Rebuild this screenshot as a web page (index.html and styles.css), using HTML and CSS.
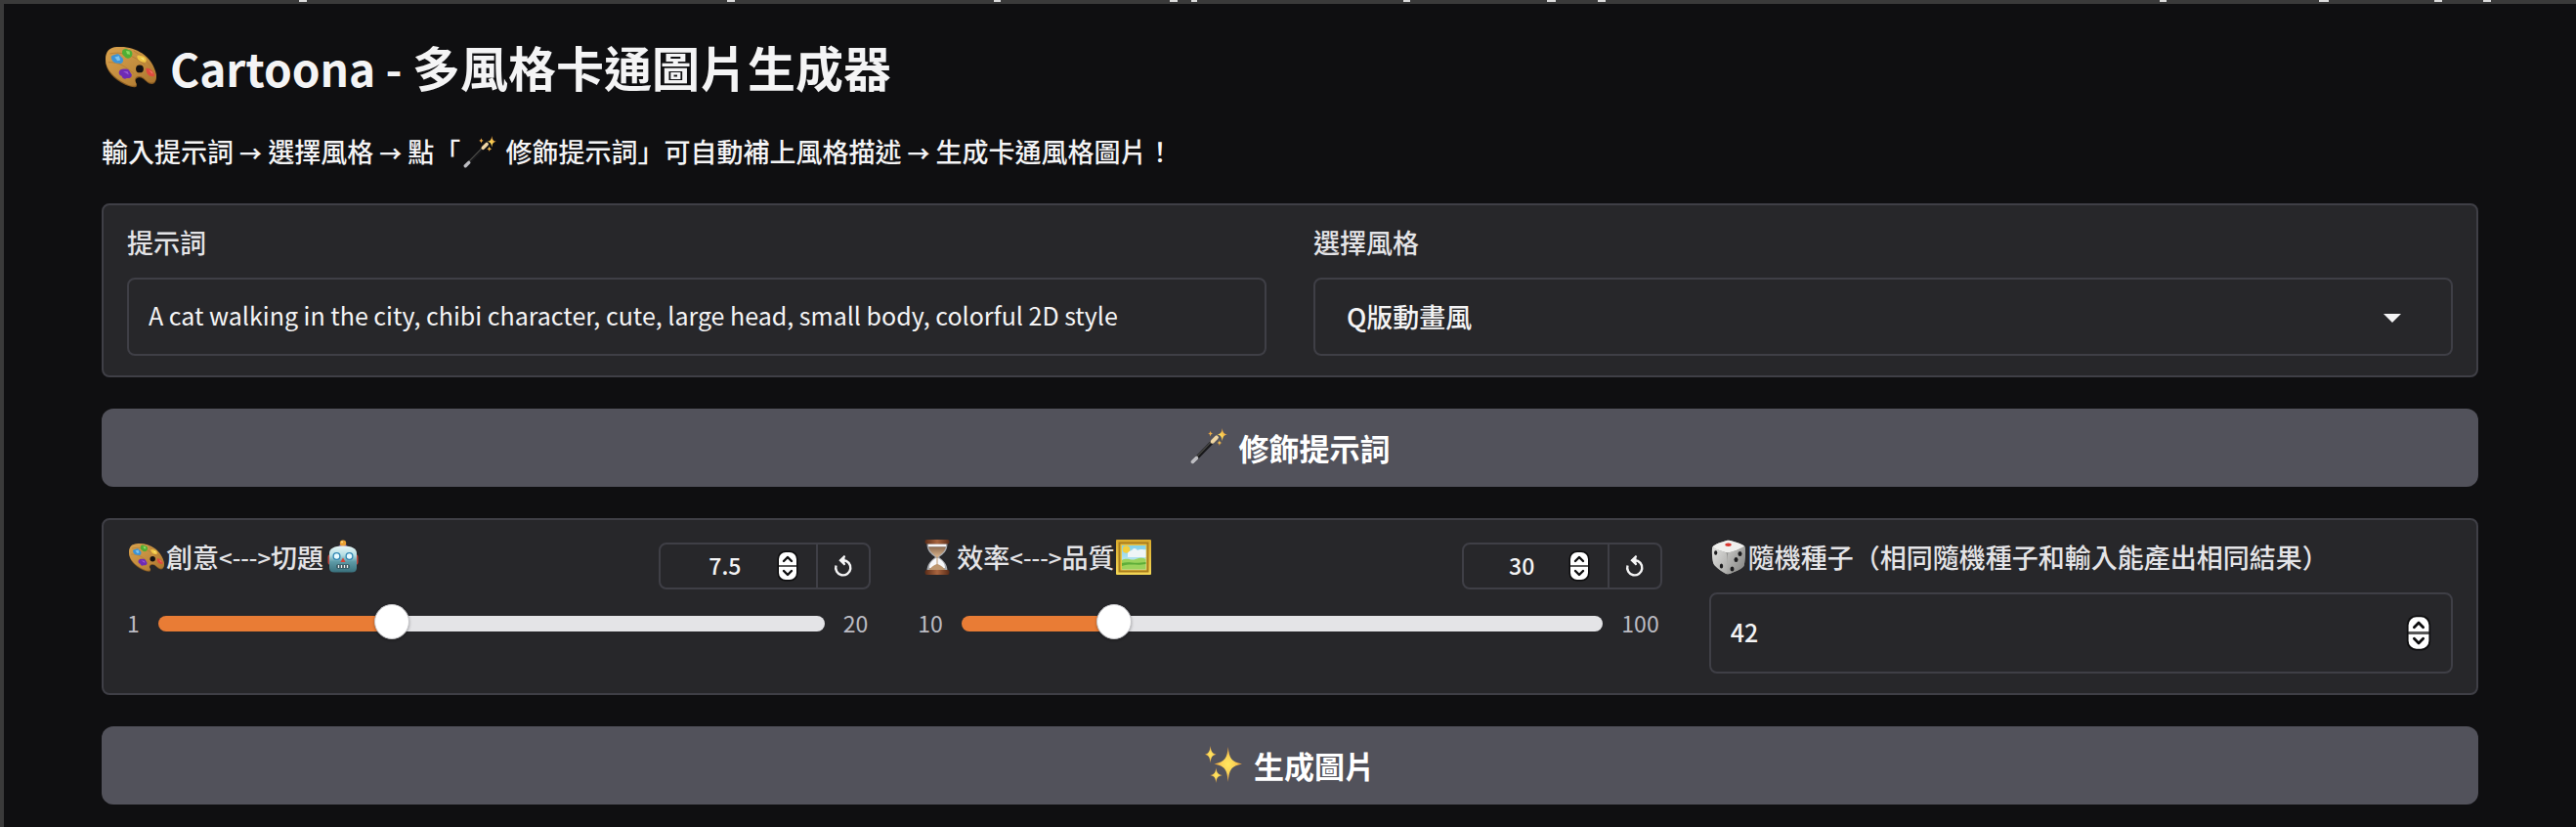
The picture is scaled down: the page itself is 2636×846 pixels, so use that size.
FILE: index.html
```html
<!DOCTYPE html>
<html lang="zh-Hant">
<head>
<meta charset="utf-8">
<meta name="viewport" content="width=device-width, initial-scale=1">
<title>Cartoona</title>
<link rel="stylesheet" href="styles.css">
</head>
<body>
<svg class="defs" aria-hidden="true">
  <defs>
    <linearGradient id="wood" x1="0" y1="0" x2="1" y2="1"><stop offset="0" stop-color="#d9a24e"/><stop offset=".6" stop-color="#c08a3c"/><stop offset="1" stop-color="#a8722c"/></linearGradient>
    <linearGradient id="face" x1="0" y1="0" x2="0" y2="1"><stop offset="0" stop-color="#e8f7f8"/><stop offset=".35" stop-color="#b4dde2"/><stop offset=".6" stop-color="#5d9aa6"/><stop offset="1" stop-color="#39707c"/></linearGradient>
    <linearGradient id="brown" x1="0" y1="0" x2="1" y2="0"><stop offset="0" stop-color="#5a2c18"/><stop offset=".5" stop-color="#a9653f"/><stop offset="1" stop-color="#5a2c18"/></linearGradient>
    <linearGradient id="sand" x1="0" y1="0" x2="0" y2="1"><stop offset="0" stop-color="#8e6c51"/><stop offset="1" stop-color="#d9b48d"/></linearGradient>
    <linearGradient id="sky" x1="0" y1="0" x2="0" y2="1"><stop offset="0" stop-color="#7fd0ea"/><stop offset="1" stop-color="#d9f0f4"/></linearGradient>
    <linearGradient id="gold" x1="0" y1="0" x2="0" y2="1"><stop offset="0" stop-color="#d8a92c"/><stop offset="1" stop-color="#f3d655"/></linearGradient>
    <linearGradient id="die-left" x1="0" y1="0" x2="1" y2="1"><stop offset="0" stop-color="#e2e2e0"/><stop offset="1" stop-color="#a9a9a7"/></linearGradient>
    <linearGradient id="die-right" x1="0" y1="0" x2="1" y2="1"><stop offset="0" stop-color="#c9c9c7"/><stop offset="1" stop-color="#80807e"/></linearGradient>
    <radialGradient id="spark"><stop offset="0" stop-color="#ffe75f"/><stop offset=".45" stop-color="#fbd457"/><stop offset="1" stop-color="#e79a3c"/></radialGradient>
  </defs>
  <symbol id="palette" viewBox="0 0 36 36">
    <path fill="#8a5c22" d="M0 14C0 8 3 5 8 4.600C15 4 21 6 26 9.500C31 13 35 19 36 25C36.200 28 35 30.200 33 30.400C30 30.400 28.500 28 26.500 26.600C24 25 21 26 21.200 28.500C21.300 30 22.500 30.500 22 32C21 33.400 18 32.500 14 31C6 27 0 21 0 14Z"/>
    <path fill="url(#wood)" d="M0 13C0 7 3 4.500 8 4.200C15 3.600 21 5.300 26 8.700C31 12 35 18 36 24C36.200 27 35 29.300 33 29.500C30 29.600 28.500 27.200 26.500 25.800C24 24 20.700 25 20.800 27.700C21 29.400 22.500 30 21.500 31.300C20 32.300 17 31.500 13.500 29.700C6 26 0 20 0 13Z"/>
    <path fill="none" stroke="#b47c34" stroke-width=".6" d="M3 9C11 7 20 10 28 17M2 15C10 15 14 18 20 23M20 7C25 10 29 14 32 18"/>
    <circle cx="24.200" cy="19.700" r="2.700" fill="#141112"/>
    <path fill="#3d93d6" d="M4 11C5 9.500 7 10 8 9.200C10 8.700 10.500 11 12 12C13.500 14 11.500 17 9.500 15.800C7 16 4 14.500 4 11Z"/>
    <path fill="#7cc4ee" d="M6.500 11.500l3-1l1 3l-2 .5z"/>
    <path fill="#4fae35" d="M11.800 7.500C12 5 15 5.200 16 6.200C19 6 19.500 9 18.600 10.600C17.500 13 14 12.500 13.300 10.800C12 10 11.600 9 11.800 7.500Z"/>
    <path fill="#8edb63" d="M14.500 7l2.500.3l.3 2.300l-2-.4z"/>
    <path fill="#efc545" d="M22.300 10.800C23.500 9.200 25 10.600 26.500 10.700C29 11.300 29.500 14 28.300 15C26 15.500 22.500 14 22.300 10.800Z"/>
    <path fill="#fdeb8a" d="M24.500 11.500l2.500.8l.3 1.600z"/>
    <path fill="#6e2bb4" d="M9.500 22C9.800 20 12 19.500 14 19.800C17 19.300 17 22 18.500 23.500C19 26 16.500 26.500 15 26.300C13 27.500 11.700 26 11.500 24.800C10 24.400 9.300 23.500 9.500 22Z"/>
    <path fill="#9b5ad8" d="M12.500 21.500l3.200.2l.8 2.200z"/>
    <path fill="#de4a3e" d="M28.500 19.500C31 18.500 33.500 21 34.800 24C34.500 26 30.500 25 29.300 22.800Z"/>
    <path fill="#f58a74" d="M30.500 20.500l2.500 1.500l.5 1.500z"/>
  </symbol>
  <symbol id="wand" viewBox="0 0 36 36">
    <path stroke="#17171a" stroke-width="3.600" stroke-linecap="round" d="M2.600 32.600L25.500 9"/>
    <path stroke="#4c4c48" stroke-width="1.200" d="M5.500 28.500L22 11.500"/>
    <path stroke="#bdbdc2" stroke-width="3.600" stroke-linecap="round" d="M2.400 32.600L6 29"/>
    <path stroke="#f0d7a4" stroke-width="3.800" stroke-linecap="round" d="M21.500 13L25.500 9"/>
    <path fill="url(#spark)" d="M31 0C31.600 4 32.300 5.500 36 6.200C32.300 7 31.600 8.500 31 12.500C30.400 8.500 29.700 7 26 6.200C29.700 5.500 30.400 4 31 0ZM19.500 2.500C20 4.400 20.300 4.900 22 5.300C20.300 5.700 20 6.200 19.500 8C19 6.200 18.700 5.700 17 5.300C18.700 4.900 19 4.400 19.500 2.500ZM28.300 11.500C28.700 13.400 29.200 13.800 31 14.200C29.200 14.600 28.700 15 28.300 17C27.900 15 27.400 14.600 25.600 14.200C27.400 13.800 27.900 13.400 28.300 11.500Z"/>
  </symbol>
  <symbol id="robot" viewBox="0 0 36 36">
    <rect x="2.500" y="15" width="31" height="11" rx="3" fill="#c2463c"/>
    <path fill="#7c4a9c" d="M14.500 5h7v4h-7z"/>
    <circle cx="18" cy="3.600" r="3.200" fill="#e9a032"/>
    <circle cx="17" cy="2.600" r="1" fill="#ffe08a"/>
    <path fill="url(#face)" d="M4 14C4 9 9 6.500 18 6.500S32 9 32 14V29C32 32 30 33.500 27 33.500H9C6 33.500 4 32 4 29Z"/>
    <circle cx="11.500" cy="17" r="4" fill="#3186b4"/><circle cx="24.500" cy="17" r="4" fill="#3186b4"/>
    <circle cx="11.500" cy="17" r="2.700" fill="#e8fbff"/><circle cx="24.500" cy="17" r="2.700" fill="#e8fbff"/>
    <path fill="#d6443a" d="M18 18.500l2.600 4.500h-5.200z"/>
    <rect x="11.500" y="25.500" width="13" height="4" rx="1" fill="#253f48"/>
    <path stroke="#e7eff0" stroke-width="1.500" d="M13.500 26v3M16.500 26v3M19.500 26v3M22.500 26v3"/>
  </symbol>
  <symbol id="hourglass" viewBox="0 0 36 36">
    <path fill="#c9ccd0" opacity=".8" d="M7.500 4H28.500C28.500 12 24 15 20 18C24 21 28.500 25 28.500 32H7.500C7.500 25 12 21 16 18C12 15 7.500 12 7.500 4Z"/>
    <path fill="#f7f8fa" d="M9 4.500H27V7H9ZM10 29C10 24 13 21 17 19H19C23 21 26 24 26 29Z"/>
    <path fill="url(#sand)" d="M9.200 7.500H26.800C26 12 22 14.500 18.600 18H17.400C14 14.500 10 12 9.200 7.500Z"/>
    <path fill="#bd9770" d="M17.500 17h1v8C22 26.500 25 28.500 26.500 31.500H9.500C11 28.500 14 26.500 17.500 25Z"/>
    <rect x="5.500" y="0" width="25" height="4.500" rx="2" fill="url(#brown)"/>
    <rect x="5.500" y="31" width="25" height="5" rx="2" fill="url(#brown)"/>
  </symbol>
  <symbol id="picture" viewBox="0 0 36 36">
    <rect width="36" height="36" rx="1" fill="url(#gold)"/>
    <rect x="2.500" y="2.500" width="31" height="31" fill="#a97c1e"/>
    <rect x="4.500" y="4.500" width="27" height="27" fill="#e9c546"/>
    <rect x="6" y="6" width="24.500" height="24.500" fill="url(#sky)"/>
    <circle cx="10.500" cy="10" r="3.800" fill="#f4cf3c"/>
    <path fill="#eff5f7" d="M12 14c1-3 4-2 5-4s4-1 5 1c3-2 6 0 8.500-1v8H12z"/>
    <path fill="#9bd35c" d="M6 21c6-3 10 1 14-1 4-1 7-2 10.500 0v10.500H6z"/>
    <path fill="#5fae3a" d="M6 24c7-2 12 1 24.500-1v2c-10 2-15-1-24.500 2z"/>
  </symbol>
  <symbol id="die" viewBox="0 0 36 36">
    <path fill="#8f8f8d" d="M17 .8C19 .4 32 4.500 34 6.500C36 9 34.500 24 33.500 27C32 30 19 35.500 16.500 35.300C14 35 4 28 2.600 25C1 21 .4 10 1.400 7.500C2.500 5 14 1.300 17 .8Z"/>
    <path fill="#efefed" d="M17 .8C19 .4 32 4.500 34 6.500C33 9 20 13.500 16.500 13.300C13 13 3 9.500 1.400 7.500C2.500 5 14 1.300 17 .8Z"/>
    <path fill="url(#die-left)" d="M1.400 7.500C4 10 13 12 15.500 13.500C17 16 17.500 33 16.500 35.300C14 35 4 28 2.600 25C1 21 .4 10 1.400 7.500Z"/>
    <path fill="url(#die-right)" d="M34 6.500C36 9 34.500 24 33.500 27C32 30 19 35.500 16.500 35.300C17.500 31 16 16 17.500 13.500C20 13 32 9 34 6.500Z"/>
    <ellipse cx="17.500" cy="5.200" rx="3.200" ry="1.700" fill="#d8362f"/>
    <g fill="#1c1c1e"><ellipse cx="4.700" cy="13.500" rx="1.600" ry="2.300"/><ellipse cx="10.500" cy="27" rx="1.700" ry="2.500"/><ellipse cx="29.500" cy="14.500" rx="2" ry="2.500"/><ellipse cx="25.500" cy="20.500" rx="2" ry="2.500"/><ellipse cx="21.500" cy="30" rx="2" ry="2.500"/></g>
  </symbol>
  <symbol id="sparkles" viewBox="0 0 36 36">
    <path fill="url(#spark)" d="M22.500 1C23.500 12 25.500 15.500 36 17.500C25.500 19.500 23.500 23 22.500 35C21.500 23 19.500 19.500 9 17.500C19.500 15.500 21.500 12 22.500 1Z"/>
    <path fill="url(#spark)" d="M5.300 0C6 5.500 6.700 7.200 11 8.200C6.700 9.200 6 11 5.300 16.500C4.600 11 3.900 9.200 0 8.200C3.900 7.200 4.600 5.500 5.300 0Z"/>
    <path fill="url(#spark)" d="M10.800 21C11.400 26 12.300 27.500 17 28.500C12.300 29.500 11.400 31 10.800 36C10.200 31 9.300 29.500 5 28.500C9.300 27.500 10.200 26 10.800 21Z"/>
  </symbol>
  <symbol id="stepper" viewBox="0 0 22 32">
    <rect x=".5" y=".5" width="21" height="31" rx="8" fill="#0d0d0e"/>
    <path fill="#fff" d="M2 15V9a7 7 0 0 1 7-7h4a7 7 0 0 1 7 7v6zM2 17v6a7 7 0 0 0 7 7h4a7 7 0 0 0 7-7v-6z"/>
    <path fill="#5b5b5b" d="M2 15h18v2H2z"/>
    <path fill="none" stroke="#0d0d0e" stroke-width="2.400" stroke-linecap="round" stroke-linejoin="round" d="M7 11l4-4l4 4M7 21l4 4l4-4"/>
  </symbol>
  <symbol id="reset" viewBox="0 0 20 24">
    <path fill="none" stroke="#f4f4f5" stroke-width="2.400" d="M2.500 11.500A7.600 7.600 0 1 0 10 6.200H7.500"/>
    <path fill="#f4f4f5" d="M11.500 1.300L6 6.300l5.500 5v-3z"/>
    <path fill="none" stroke="#f4f4f5" stroke-width="2" d="M11.500 1.800L6.800 6.300l4.700 4.500"/>
  </symbol>
</svg>

<svg class="topstrip" viewBox="0 0 2636 4" preserveAspectRatio="none" aria-hidden="true">
  <rect width="2636" height="4" fill="#3a3a3a"/>
  <path fill="#dcdcdc" d="M306 0h8v2h-8zM744 0h8v2h-8zM1017 0h7v2h-7zM1197 0h8v2h-8zM1219 0h6v2h-6zM1436 0h7v2h-7zM1583 0h9v2h-9zM1635 0h8v2h-8zM2210 0h7v2h-7zM2373 0h10v2h-10zM2491 0h8v2h-8zM2541 0h8v2h-8z"/>
</svg>

<main class="page">
  <h1 class="title"><svg class="title-icon" aria-hidden="true"><use href="#palette"/></svg><span><span class="title-latin">Cartoona - </span>多風格卡通圖片生成器</span></h1>
  <p class="intro">輸入提示詞 <span class="arrow">→</span> 選擇風格 <span class="arrow">→</span> 點「<svg class="emoji intro-icon" aria-hidden="true"><use href="#wand"/></svg> 修飾提示詞」可自動補上風格描述 <span class="arrow">→</span> 生成卡通風格圖片！</p>

  <section class="card two">
    <div class="field">
      <label class="label" for="prompt">提示詞</label>
      <input class="control prompt" id="prompt" type="text" value="A cat walking in the city, chibi character, cute, large head, small body, colorful 2D style">
    </div>
    <div class="field">
      <label class="label" for="style">選擇風格</label>
      <div class="select-wrap">
        <select class="control select" id="style"><option>Q版動畫風</option></select>
      </div>
    </div>
  </section>

  <button class="action" type="button"><svg class="action-icon" aria-hidden="true"><use href="#wand"/></svg>修飾提示詞</button>

  <section class="card three">
    <div class="field">
      <div class="head">
        <label class="label" for="cfg"><svg class="emoji" aria-hidden="true"><use href="#palette"/></svg>創意<span class="range-mark">&lt;---&gt;</span>切題<svg class="emoji" aria-hidden="true"><use href="#robot"/></svg></label>
        <div class="number">
          <input class="number-input wide" type="number" step="0.5" value="7.5" aria-label="創意 切題">
          <svg class="stepper" aria-hidden="true"><use href="#stepper"/></svg>
          <button class="reset" type="button" aria-label="重設"><svg class="reset-icon" aria-hidden="true"><use href="#reset"/></svg></button>
        </div>
      </div>
      <div class="slider">
        <span class="bound">1</span>
        <input class="range" id="cfg" type="range" min="1" max="20" step="0.5" value="7.5" style="--fill: 34.8%">
        <span class="bound">20</span>
      </div>
    </div>
    <div class="field">
      <div class="head">
        <label class="label" for="steps"><svg class="emoji" aria-hidden="true"><use href="#hourglass"/></svg>效率<span class="range-mark">&lt;---&gt;</span>品質<svg class="emoji" aria-hidden="true"><use href="#picture"/></svg></label>
        <div class="number">
          <input class="number-input" type="number" value="30" aria-label="效率 品質">
          <svg class="stepper" aria-hidden="true"><use href="#stepper"/></svg>
          <button class="reset" type="button" aria-label="重設"><svg class="reset-icon" aria-hidden="true"><use href="#reset"/></svg></button>
        </div>
      </div>
      <div class="slider">
        <span class="bound">10</span>
        <input class="range" id="steps" type="range" min="10" max="100" value="30" style="--fill: 23.7%">
        <span class="bound">100</span>
      </div>
    </div>
    <div class="field">
      <label class="label" for="seed"><svg class="emoji" aria-hidden="true"><use href="#die"/></svg>隨機種子（相同隨機種子和輸入能產出相同結果）</label>
      <div class="control seed">
        <input class="seed-input" id="seed" type="number" value="42">
        <svg class="stepper large" aria-hidden="true"><use href="#stepper"/></svg>
      </div>
    </div>
  </section>

  <button class="action" type="button"><svg class="action-icon" aria-hidden="true"><use href="#sparkles"/></svg>生成圖片</button>
</main>
</body>
</html>
```

FILE: styles.css
```css
:root {
  --bg: #0f0f11;
  --card: #27272a;
  --line: #3f3f46;
  --button: #52525b;
  --text: #f4f4f5;
  --label: #e4e4e7;
  --muted: #bbbbc2;
  --accent: #e97c35;
}

* { box-sizing: border-box; }

body {
  margin: 0;
  min-height: 100vh;
  display: flex;
  flex-direction: column;
  background: var(--bg);
  color: var(--text);
  font-family: "Noto Sans CJK TC", sans-serif;
  font-size: 27px;
  font-weight: 500;
}

input, select, button { font: inherit; color: inherit; }

.defs { position: absolute; width: 0; height: 0; }

.topstrip { display: block; width: 100%; height: 4px; flex: none; }

.page {
  flex: 1;
  display: flex;
  flex-direction: column;
  gap: 32px;
  border-left: 4px solid #3a3a3a;
  padding: 32px 100px 18px;
}

.title {
  margin: 0;
  display: flex;
  align-items: center;
  font-size: 49px;
  line-height: 64px;
  font-weight: 700;
}

.title-icon { width: 52px; height: 52px; margin: 0 14px 0 4px; }

.title-latin { font-size: 46px; line-height: 1; }

.intro { margin: 5px 0 3px; line-height: 36px; }

.arrow { font-size: 23px; line-height: 1; font-weight: 700; }

.emoji { width: 36px; height: 36px; margin: 0 2px; flex: none; }

.intro-icon { width: 34px; height: 34px; margin: -7px 3px -1px; vertical-align: middle; }

.card {
  display: grid;
  column-gap: 48px;
  padding: 20px 24px;
  background: var(--card);
  border: 2px solid var(--line);
  border-radius: 8px;
}

.two { grid-template-columns: repeat(2, minmax(0, 1fr)); }
.three { grid-template-columns: repeat(3, minmax(0, 1fr)); }

.label {
  display: flex;
  align-items: center;
  line-height: 36px;
  color: var(--label);
}

.range-mark { font-size: 24px; }

.field > .label { margin-bottom: 18px; }

.control {
  display: block;
  width: 100%;
  height: 80px;
  padding: 0 20px 4px;
  background: var(--card);
  border: 2px solid var(--line);
  border-radius: 8px;
  outline: none;
}

.prompt { font-size: 25px; font-weight: 400; }

.select-wrap { position: relative; }

.select { appearance: none; padding: 0 32px 1px; }

.select-wrap::after {
  content: "";
  position: absolute;
  right: 53px;
  top: 37px;
  border: 9px solid transparent;
  border-top-color: var(--text);
  border-bottom-width: 0;
  pointer-events: none;
}

.action {
  display: flex;
  align-items: center;
  justify-content: center;
  gap: 12px;
  height: 80px;
  padding: 0 0 2px;
  flex: none;
  border: 0;
  border-radius: 12px;
  background: var(--button);
  color: #fff;
  font-size: 31px;
  font-weight: 700;
}

.action-icon { width: 38px; height: 38px; }

.head {
  display: flex;
  justify-content: space-between;
  align-items: flex-start;
}

.number {
  display: flex;
  align-items: center;
  height: 48px;
  margin-top: 3px;
  padding-left: 12px;
  border: 2px solid var(--line);
  border-radius: 8px;
}

.number-input, .seed-input {
  appearance: textfield;
  padding: 0;
  border: 0;
  outline: none;
  background: none;
}

.number-input::-webkit-inner-spin-button,
.seed-input::-webkit-inner-spin-button { appearance: none; margin: 0; }

.number-input {
  width: 95px;
  padding-bottom: 2px;
  text-align: center;
  font-size: 23px;
}

.wide { width: 107px; }

.stepper { width: 22px; height: 32px; flex: none; }
.large { width: 26px; height: 37px; }

.reset {
  display: flex;
  align-items: center;
  justify-content: center;
  width: 54px;
  height: 44px;
  margin-left: 18px;
  padding: 0;
  border: 0;
  border-left: 2px solid var(--line);
  background: none;
}

.reset-icon { width: 20px; height: 24px; }

.slider {
  display: flex;
  align-items: center;
  gap: 19px;
  height: 36px;
  margin-top: 17px;
  padding-right: 3px;
}

.bound {
  padding-bottom: 2px;
  color: var(--muted);
  font-size: 23px;
  font-weight: 400;
}

.range {
  appearance: none;
  flex: 1;
  min-width: 0;
  height: 36px;
  margin: 0;
  background: none;
}

.range::-webkit-slider-runnable-track {
  height: 16px;
  border-radius: 8px;
  background: linear-gradient(to right, var(--accent) var(--fill), var(--label) var(--fill));
}

.range::-webkit-slider-thumb {
  appearance: none;
  width: 36px;
  height: 36px;
  margin-top: -12px;
  border: 1px solid #c4c4c8;
  border-radius: 50%;
  background: #fff;
  box-shadow: 0 1px 3px rgba(0, 0, 0, .3);
}

.seed {
  display: flex;
  align-items: center;
  height: 83px;
  padding-bottom: 0;
}

.seed-input { flex: 1; min-width: 0; padding-bottom: 3px; font-size: 25px; }
```
